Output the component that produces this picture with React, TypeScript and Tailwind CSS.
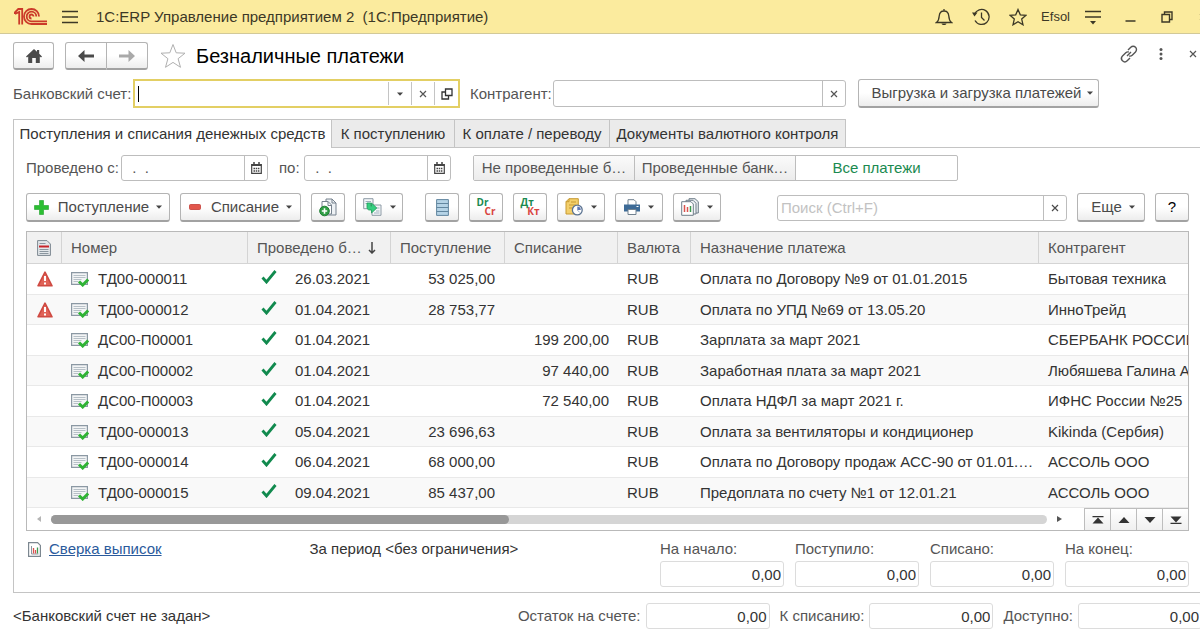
import { ReactNode } from "react"

type Payment = {
    warning?: boolean
    number: string
    date: string
    income?: string
    expense?: string
    purpose: string
    partner: string
}

const payments: Payment[] = [
    { warning: true, number: "ТД00-000011", date: "26.03.2021", income: "53 025,00", purpose: "Оплата по Договору №9 от 01.01.2015", partner: "Бытовая техника" },
    { warning: true, number: "ТД00-000012", date: "01.04.2021", income: "28 753,77", purpose: "Оплата по УПД №69 от 13.05.20", partner: "ИнноТрейд" },
    { number: "ДС00-П00001", date: "01.04.2021", expense: "199 200,00", purpose: "Зарплата за март 2021", partner: "СБЕРБАНК РОССИИ" },
    { number: "ДС00-П00002", date: "01.04.2021", expense: "97 440,00", purpose: "Заработная плата за март 2021", partner: "Любяшева Галина Ар" },
    { number: "ДС00-П00003", date: "01.04.2021", expense: "72 540,00", purpose: "Оплата НДФЛ за март 2021 г.", partner: "ИФНС России №25" },
    { number: "ТД00-000013", date: "05.04.2021", income: "23 696,63", purpose: "Оплата за вентиляторы и кондиционер", partner: "Kikinda (Сербия)" },
    { number: "ТД00-000014", date: "06.04.2021", income: "68 000,00", purpose: "Оплата по Договору продаж АСС-90 от 01.01.…", partner: "АССОЛЬ ООО" },
    { number: "ТД00-000015", date: "09.04.2021", income: "85 437,00", purpose: "Предоплата по счету №1 от 12.01.21", partner: "АССОЛЬ ООО" },
]

const raised = "flex shrink-0 items-center justify-center rounded-[3px] border border-[#b4b4b4] border-b-2 border-b-[#a2a2a2] bg-linear-to-b from-white from-50% to-[#ededed]"

export default function App() {
    return (
        <div className="overflow-hidden bg-white font-['Liberation_Sans',Arial,sans-serif] text-[15px] leading-5 text-[#333]">
            <TitleBar />
            <main className="pl-[13px]">
                <PageHeader />
                <Filters />
                <Tabs />
                <section className="border-b border-l border-[#c4c4c4] pt-[7px] pr-[11px] pb-[5px] pl-3">
                    <PeriodRow />
                    <Toolbar />
                    <PaymentsTable />
                    <Totals />
                </section>
                <Footer />
            </main>
        </div>
    )
}

function TitleBar() {
    return (
        <header className="flex h-[34px] items-center border-b border-[#d2c998] bg-[#fbeb9e] pl-[14px] text-[#3c3826]">
            <Logo />
            <button aria-label="Меню" className="ml-[14px]">
                <Stroke w={16} h={16} width={1.4}><path d="M0 2.500h16M0 8h16M0 13.500h16" /></Stroke>
            </button>
            <h1 className="ml-[18px] whitespace-pre">1С:ERP Управление предприятием 2  (1С:Предприятие)</h1>
            <div className="ml-auto flex shrink-0 items-center">
                <button aria-label="Уведомления">
                    <Stroke w={18} h={18} width={1.3}>
                        <path d="M1.500 14.500c2-1.500 2.500-3 2.700-6.500C4.500 4.500 6.300 3 9 3s4.500 1.500 4.800 5c.2 3.500.7 5 2.700 6.500zM9 1v2" />
                        <path d="M6.500 15.500h5c-.5 2-4.500 2-5 0z" fill="currentColor" stroke="none" />
                    </Stroke>
                </button>
                <button aria-label="История" className="ml-[19px]">
                    <Stroke w={18} h={18} width={1.3}>
                        <path d="M2.500 6.500A7.500 7.500 0 1 1 3 12.500M9.500 4.500V9.500l3 3" />
                        <path d="M0 4.500l5.500 0-3 4z" fill="currentColor" stroke="none" />
                    </Stroke>
                </button>
                <button aria-label="Избранное" className="ml-[19px]">
                    <Stroke w={18} h={18} width={1.3}>
                        <path d="M9 1.500l2.300 5.300 5.700.5-4.300 3.800 1.300 5.700L9 13.800 4 16.800l1.300-5.700L1 7.300l5.700-.5z" />
                    </Stroke>
                </button>
                <button className="ml-[14px] text-[13px]">Efsol</button>
                <button aria-label="Настройки" className="ml-[14px]">
                    <Stroke w={18} h={16} width={1.4}>
                        <path d="M1 2.500h16M1 8h16" />
                        <path d="M6 12h6l-3 3.500z" fill="currentColor" stroke="none" />
                    </Stroke>
                </button>
                <button aria-label="Свернуть" className="ml-[23px]">
                    <Stroke w={11} h={12} width={1.5}><path d="M.5 10h10" /></Stroke>
                </button>
                <button aria-label="Восстановить" className="ml-[25px]">
                    <Stroke w={12} h={12} width={1.4}><path d="M1 3.500h7.500v7.500H1zM3.500 3.500V1H11v7.500H8.500" /></Stroke>
                </button>
                <button aria-label="Закрыть" className="ml-[26px] w-px overflow-hidden">
                    <Cross />
                </button>
            </div>
        </header>
    )
}

function PageHeader() {
    return (
        <div className="flex h-9 items-center pt-2">
            <button aria-label="Домой" className={`${raised} h-7 w-[41px] text-[#4a4a4a]`}>
                <svg width="16" height="14" viewBox="0 0 16 14" fill="currentColor">
                    <path d="M8 0l3 2.800V1h2.200v3.800L16 7.500l-1 1-1.200-1V14H9.800V9H6.200v5H2.200V7.500L1 8.500l-1-1z" />
                </svg>
            </button>
            <div className="ml-[11px] flex">
                <button aria-label="Назад" className={`${raised} h-7 w-[42px] rounded-r-none text-[#4a4a4a]`}>
                    <Arrow />
                </button>
                <button aria-label="Вперед" className={`${raised} h-7 w-[41px] rounded-l-none border-l-0 text-[#a9a9a9]`}>
                    <span className="rotate-180"><Arrow /></span>
                </button>
            </div>
            <button aria-label="В избранное" className="ml-3 text-[#b0b0b0]">
                <Stroke w={26} h={26} width={1}>
                    <path d="M13 1.500l3.200 8.300 8.800.4-6.900 5.500 2.400 8.600L13 19.400l-7.500 4.900 2.400-8.600L1 10.200l8.800-.4z" />
                </Stroke>
            </button>
            <h2 className="ml-[10px] text-[20px] text-black">Безналичные платежи</h2>
            <div className="mb-1 ml-auto flex items-center text-[#555]">
                <button aria-label="Ссылка">
                    <Stroke w={18} h={18} width={1.4}>
                        <path d="M8 5l2.800-2.800a3.200 3.200 0 0 1 4.700 4.700L12.200 10.200a3.200 3.200 0 0 1-3 .8M10 13l-2.800 2.800a3.200 3.200 0 0 1-4.700-4.700L5.800 7.800a3.200 3.200 0 0 1 3-.8M7 11l4-4" />
                    </Stroke>
                </button>
                <button aria-label="Еще" className="ml-[21px]">
                    <svg width="4" height="12" viewBox="0 0 4 12" fill="currentColor">
                        <circle cx="2" cy="1.500" r="1.500" /><circle cx="2" cy="6" r="1.500" /><circle cx="2" cy="10.500" r="1.500" />
                    </svg>
                </button>
                <button aria-label="Закрыть форму" className="mr-[3px] ml-[26px]"><Cross /></button>
            </div>
        </div>
    )
}

function Filters() {
    return (
        <div className="mt-[9px] flex items-center text-[#555]">
            <label htmlFor="account" className="w-[120px] shrink-0">Банковский счет:</label>
            <div className="flex h-[29px] w-[327px] shrink-0 border-2 border-[#e3cf64] py-px">
                <div className="flex min-w-0 flex-1 items-center pl-[3px]">
                    <span className="h-4 w-px bg-black" />
                    <input id="account" className="w-full min-w-0 outline-none" />
                </div>
                <button aria-label="Выбрать счет" className="flex w-[23px] items-center justify-center border-l border-[#c4c4c4]"><Caret /></button>
                <button aria-label="Очистить счет" className="flex w-[23px] items-center justify-center border-l border-[#c4c4c4]"><Cross /></button>
                <button aria-label="Открыть счет" className="flex w-6 items-center justify-center border-l border-[#c4c4c4] text-[#333]">
                    <Stroke w={12} h={12} width={1.3}><path d="M4.500 1H11v6.500H4.500zM4.500 4H1v7h6.500V7.500" /></Stroke>
                </button>
            </div>
            <label htmlFor="partner" className="ml-[10px] w-[83px] shrink-0">Контрагент:</label>
            <div className="flex h-[27px] w-[293px] rounded-[3px] border border-[#bdbdbd]">
                <input id="partner" className="min-w-0 flex-1 px-1 outline-none" />
                <button aria-label="Очистить контрагента" className="flex w-[23px] items-center justify-center border-l border-[#bdbdbd]"><Cross /></button>
            </div>
            <button className={`${raised} ml-3 h-[29px] w-[241px] gap-[6px] pl-2 text-[#4a4a4a]`}>
                Выгрузка и загрузка платежей <Caret />
            </button>
        </div>
    )
}

function Tabs() {
    const tab = "shrink-0 border-[#c4c4c4] text-center"
    return (
        <div role="tablist" className="mt-[11px] flex h-[29px] text-[#333]">
            <button role="tab" aria-selected="true" className={`${tab} w-[319px] border-x border-t`}>Поступления и списания денежных средств</button>
            <button role="tab" aria-selected="false" className={`${tab} w-[123px] border-y border-r bg-[#ebebeb]`}>К поступлению</button>
            <button role="tab" aria-selected="false" className={`${tab} w-[155px] border-y border-r bg-[#ebebeb]`}>К оплате / переводу</button>
            <button role="tab" aria-selected="false" className={`${tab} w-[236px] border-y border-r bg-[#ebebeb]`}>Документы валютного контроля</button>
            <div className="flex-1 border-b border-[#c4c4c4]" />
        </div>
    )
}

function DateField({ id }: { id: string }) {
    return (
        <div className="flex h-[26px] w-[147px] rounded-[3px] border border-[#bdbdbd]">
            <input id={id} defaultValue=" .  ." className="min-w-0 flex-1 px-[6px] whitespace-pre outline-none" />
            <button aria-label="Календарь" className="flex w-[23px] items-center justify-center border-l border-[#bdbdbd]">
                <svg width="11" height="12" viewBox="0 0 11 12" fill="none" stroke="#444">
                    <path d="M.7 2.500h9.600v8.800H.7z" strokeWidth="1.200" />
                    <path d="M.5 3h10" strokeWidth="2" />
                    <path d="M3 0v3M8 0v3" strokeWidth="1.500" />
                    <path d="M2.500 6.500h6M2.500 9h6" strokeWidth="1.500" strokeDasharray="1.500 .7" />
                </svg>
            </button>
        </div>
    )
}

function PeriodRow() {
    const option = "h-full border-[#bdbdbd] text-center whitespace-nowrap"
    return (
        <div className="flex items-center text-[#555]">
            <label htmlFor="from" className="w-[95px] shrink-0">Проведено с:</label>
            <DateField id="from" />
            <label htmlFor="to" className="ml-[11px] w-[25px] shrink-0">по:</label>
            <DateField id="to" />
            <div className="ml-[22px] flex h-[26px] w-[485px] rounded-[2px] border border-[#bdbdbd]">
                <button className={`${option} w-[161px] border-r bg-linear-to-b from-[#fafafa] to-[#ececec]`}>Не проведенные б…</button>
                <button className={`${option} w-[161px] border-r bg-linear-to-b from-[#fafafa] to-[#ececec]`}>Проведенные банк…</button>
                <button aria-pressed="true" className={`${option} flex-1 text-[#1a8a50]`}>Все платежи</button>
            </div>
        </div>
    )
}

function Toolbar() {
    return (
        <div className="mt-3 flex items-center gap-[10px] text-[#4a4a4a]">
            <button className={`${raised} h-[29px] w-[144px] gap-[7px]`}>
                <svg width="15" height="15" viewBox="0 0 15 15" className="mr-[2px]">
                    <path d="M5.500.5h4v5h5v4h-5v5h-4v-5h-5v-4h5z" fill="#2cbf32" stroke="#1fa02a" strokeWidth=".6" />
                </svg>
                Поступление <Caret />
            </button>
            <button className={`${raised} h-[29px] w-[121px] gap-[7px]`}>
                <svg width="12" height="6" viewBox="0 0 12 6" className="mr-[3px]">
                    <rect x=".5" y=".5" width="11" height="5" rx="1" fill="#e2574c" stroke="#c43c35" strokeWidth=".8" />
                </svg>
                Списание <Caret />
            </button>
            <IconButton label="Скопировать">
                <svg width="18" height="19" viewBox="0 0 18 19" fill="none">
                    <path d="M7 1h6l4 4v12H7z" fill="#eef2f5" stroke="#76828e" />
                    <path d="M3 3.500h6l3.500 3.500v9H3z" fill="#fff" stroke="#76828e" />
                    <path d="M9 3.500v4h3.500M13 1v4h4" stroke="#76828e" />
                    <circle cx="5.500" cy="13" r="4.800" fill="#2f9e44" stroke="#1f7d33" />
                    <path d="M5.500 10.300v5.400M2.800 13h5.400" stroke="#fff" strokeWidth="1.600" />
                </svg>
            </IconButton>
            <IconButton label="Создать на основании" menu>
                <svg width="19" height="18" viewBox="0 0 19 18" fill="none">
                    <path d="M.7.700h9.300v10H.7zM9 7h9v10.300H9z" fill="#f4f7f9" stroke="#8d9aa5" />
                    <path d="M2.500 3.500h5.500M2.500 5.500h4M12.500 10h4M13 13h3.500M11 15h5.500" stroke="#9fb0bd" />
                    <path d="M4 5v4c0 2 .9 3 2.800 3h1.700v3l5.300-5-5.300-5v3.200H7.800V5z" fill="#35cf80" stroke="#1f9a58" strokeWidth=".8" />
                </svg>
            </IconButton>
            <span className="w-[2px]" />
            <IconButton label="Реестр">
                <svg width="13" height="17" viewBox="0 0 13 17" fill="#b5d3e6" stroke="#62869f">
                    <path d="M.6.600h11.800v15.800H.6zM.6 4.500h11.800M.6 8.500h11.800M.6 12.500h11.800" />
                </svg>
            </IconButton>
            <IconButton label="Проводки международного учета"><Letters top="Dr" bottom="Cr" /></IconButton>
            <IconButton label="Проводки"><Letters top="Дт" bottom="Кт" /></IconButton>
            <IconButton label="Отложенные документы" menu>
                <svg width="18" height="18" viewBox="0 0 18 18" fill="none">
                    <path d="M4 .700h9.300V16H1V3.700z" fill="#f3cf6b" stroke="#c79a33" />
                    <path d="M4 .700v3H1M6 4h5M4 7h7M4 10h3" stroke="#c79a33" />
                    <circle cx="12.300" cy="12" r="4.900" fill="#fff" stroke="#5b7391" strokeWidth="1.300" />
                    <path d="M12.300 12V8.500a3.500 3.500 0 0 1 3.500 3.500z" fill="#5d77b5" />
                    <path d="M12.300 12l2.400 2.400" stroke="#9bb0cf" />
                </svg>
            </IconButton>
            <IconButton label="Печать" menu>
                <svg width="16" height="16" viewBox="0 0 16 16" fill="none">
                    <path d="M4 6V.700h6l2 2V6" fill="#fff" stroke="#71818f" />
                    <path d="M0 5.500h16v7H0z" fill="#3d6a96" />
                    <path d="M4 10.500h8v5H4z" fill="#fff" stroke="#71818f" />
                    <path d="M12.500 7.500h2" stroke="#fff" />
                </svg>
            </IconButton>
            <IconButton label="Отчеты" menu>
                <svg width="18" height="18" viewBox="0 0 18 18" fill="none" stroke="#6f7d89">
                    <path d="M8 .700h6l3.300 3V15H8z" fill="#e9eef1" />
                    <path d="M5 2.300h7l3 3V16H5z" fill="#f3f6f8" />
                    <path d="M.7 3.700H10l2.300 2.300v11.300H.7z" fill="#fff" />
                    <path d="M3.500 7v7M6.500 9v5" stroke="#d9534f" strokeWidth="1.500" />
                    <path d="M9.500 8v6" stroke="#3c9a4e" strokeWidth="1.500" />
                </svg>
            </IconButton>
            <div className="ml-auto flex h-[26px] w-[290px] rounded-[3px] border border-[#bdbdbd]">
                <input aria-label="Поиск" placeholder="Поиск (Ctrl+F)" className="min-w-0 flex-1 px-[3px] outline-none placeholder:text-[#c2c2c2]" />
                <button aria-label="Очистить поиск" className="flex w-[23px] items-center justify-center border-l border-[#bdbdbd]"><Cross /></button>
            </div>
            <button className={`${raised} h-[29px] w-[68px] gap-[7px] pl-1`}>Еще <Caret /></button>
            <button className={`${raised} h-[29px] w-[34px] text-black`}>?</button>
        </div>
    )
}

function IconButton({ label, menu, children }: { label: string, menu?: boolean, children: ReactNode }) {
    return (
        <button aria-label={label} className={`${raised} h-[29px] ${menu ? "w-12 gap-2" : "w-[34px]"}`}>
            {children}
            {menu && <Caret />}
        </button>
    )
}

function Letters({ top, bottom }: { top: string, bottom: string }) {
    return (
        <span className="flex w-[19px] flex-col font-['Open_Sans',sans-serif] text-[10px] leading-[9px] font-bold">
            <span className="text-left text-[#1a8a50]">{top}</span>
            <span className="text-right text-[#d9453f]">{bottom}</span>
        </span>
    )
}

function PaymentsTable() {
    const head = "border-r border-b border-[#d4d4d4] pl-[9px] text-left font-normal"
    const scroll = "flex w-[26px] items-center justify-center border-t border-l border-[#bdbdbd] bg-linear-to-b from-white to-[#f0f0f0]"
    return (
        <div className="mt-[9px] border border-[#b9b9b9]">
            <table className="w-full table-fixed border-separate border-spacing-0 whitespace-nowrap">
                <colgroup>
                    <col className="w-[35px]" />
                    <col className="w-[186px]" />
                    <col className="w-[143px]" />
                    <col className="w-[114px]" />
                    <col className="w-[113px]" />
                    <col className="w-[73px]" />
                    <col className="w-[348px]" />
                    <col />
                </colgroup>
                <thead>
                    <tr className="h-8 bg-[#f1f1f1] text-[#555]">
                        <th aria-label="Состояние" className="border-r border-b border-[#d4d4d4]">
                            <svg width="14" height="16" viewBox="0 0 14 16" fill="none" className="mx-auto">
                                <path d="M.6.600h9.400l3.400 3.400v11.400H.6z" fill="#e3e7ea" stroke="#7c8790" />
                                <path d="M2.500 3.500h6M2.500 9.500h9M2.500 11.500h9M2.500 13.500h9" stroke="#8b969f" />
                                <path d="M2 6.500h10" stroke="#c8242b" strokeWidth="2" />
                            </svg>
                        </th>
                        <th className={head}>Номер</th>
                        <th className={head}>
                            <span className="flex items-center">
                                Проведено б…
                                <svg width="8" height="12" viewBox="0 0 8 12" fill="none" stroke="#444" strokeWidth="1.500" className="ml-[6px]">
                                    <path d="M4 0v11M1 8l3 3 3-3" />
                                </svg>
                            </span>
                        </th>
                        <th className={head}>Поступление</th>
                        <th className={head}>Списание</th>
                        <th className={head}>Валюта</th>
                        <th className={head}>Назначение платежа</th>
                        <th className="border-b border-[#d4d4d4] pl-[9px] text-left font-normal">Контрагент</th>
                    </tr>
                </thead>
                <tbody>
                    {payments.map((payment) => <PaymentRow key={payment.number} payment={payment} />)}
                </tbody>
            </table>
            <div className="flex h-[22px]">
                <div className="flex flex-1 items-center pl-[10px]">
                    <svg width="4" height="6" viewBox="0 0 4 6" fill="#b5b5b5"><path d="M4 0v6L0 3z" /></svg>
                    <div className="mr-[10px] ml-[10px] h-[9px] flex-1 rounded-full bg-[#d5d5d5]">
                        <div className="h-full w-[46%] rounded-full bg-[#989898]" />
                    </div>
                    <svg width="5" height="6" viewBox="0 0 5 6" fill="#555" className="mr-[22px]"><path d="M0 0v6l5-3z" /></svg>
                </div>
                <button aria-label="В начало" className={scroll}>
                    <svg width="12" height="8" viewBox="0 0 12 8" fill="#333"><path d="M.5 0h11v1.200H.5zM6 1.500L11.500 7.500H.5z" /></svg>
                </button>
                <button aria-label="Вверх" className={scroll}>
                    <svg width="12" height="6" viewBox="0 0 12 6" fill="#333"><path d="M6 0l5.500 6H.5z" /></svg>
                </button>
                <button aria-label="Вниз" className={scroll}>
                    <svg width="12" height="6" viewBox="0 0 12 6" fill="#333"><path d="M6 6L.5 0h11z" /></svg>
                </button>
                <button aria-label="В конец" className={scroll}>
                    <svg width="12" height="8" viewBox="0 0 12 8" fill="#333"><path d="M.5 6.800h11V8H.5zM6 6.500L.5.500h11z" /></svg>
                </button>
            </div>
        </div>
    )
}

function PaymentRow({ payment }: { payment: Payment }) {
    const cell = "border-b border-[#e9e9e9] pl-[9px]"
    return (
        <tr className="odd:h-[31px] even:h-[30px] even:bg-[#f9f9f9]">
            <td className="border-b border-[#e9e9e9]">
                {payment.warning && (
                    <svg width="16" height="16" viewBox="0 0 16 16" className="mx-auto">
                        <path d="M8 1.200L15 14.800H1z" fill="#e06257" stroke="#cf4a42" strokeWidth="1.600" strokeLinejoin="round" />
                        <path d="M8 5v5M8 11.500v2" stroke="#fff" strokeWidth="2" />
                    </svg>
                )}
            </td>
            <td className={cell}>
                <span className="flex items-center gap-[9px]">
                    <svg width="18" height="16" viewBox="0 0 18 16" fill="none">
                        <path d="M.6 1.600h15.800v11.800H.6z" fill="#f3f5f6" stroke="#8b98a3" strokeWidth="1.200" />
                        <path d="M2.500 4.500h12M2.500 6.500h12M2.500 8.500h8M2.500 10.500h5" stroke="#b7c0c7" />
                        <path d="M8 10.500l3.700 3.500 5.500-5.500" stroke="#2fb334" strokeWidth="3" />
                    </svg>
                    {payment.number}
                </span>
            </td>
            <td className={cell}>
                <span className="flex items-center gap-[18px] pl-1">
                    <svg width="16" height="14" viewBox="0 0 16 14" fill="none" stroke="#118a4e" className="mb-1">
                        <path d="M1.500 7.500l4 4.500L14.500 1" strokeWidth="2.800" />
                    </svg>
                    {payment.date}
                </span>
            </td>
            <td className={`${cell} pr-[10px] text-right`}>{payment.income}</td>
            <td className={`${cell} pr-[9px] text-right`}>{payment.expense}</td>
            <td className={cell}>RUB</td>
            <td className={`${cell} truncate`}>{payment.purpose}</td>
            <td className={`${cell} overflow-hidden`}>{payment.partner}</td>
        </tr>
    )
}

const amount = "h-[26px] w-[124px] shrink-0 rounded-[3px] border border-[#dcdcdc] pr-[2px] text-right text-[#333] outline-none"

function Totals() {
    const totals = ["На начало:", "Поступило:", "Списано:", "На конец:"]
    return (
        <div className="mt-2 flex items-start">
            <svg width="13" height="15" viewBox="0 0 13 15" fill="none" className="mt-[3px] ml-[2px]">
                <path d="M.6.600h9l2.800 2.800v11H.6z" fill="#fff" stroke="#7c8790" strokeWidth="1.200" />
                <path d="M3.500 4v8h7" stroke="#8b969f" />
                <path d="M5.500 6v5.500" stroke="#d9534f" strokeWidth="1.300" />
                <path d="M7.500 8v3.500" stroke="#d9534f" strokeWidth="1.300" />
                <path d="M9.500 5.500v6" stroke="#3c9a4e" strokeWidth="1.300" />
            </svg>
            <a href="#reconcile" className="ml-2 text-[#2a5a9c] underline">Сверка выписок</a>
            <p className="ml-[148px]">За период &lt;без ограничения&gt;</p>
            <div className="ml-auto flex gap-[11px] text-[#555]">
                {totals.map((name) => (
                    <label key={name} className="flex flex-col gap-[2px]">
                        {name}
                        <input readOnly value="0,00" className={amount} />
                    </label>
                ))}
            </div>
        </div>
    )
}

function Footer() {
    const balances = ["Остаток на счете:", "К списанию:", "Доступно:"]
    return (
        <footer className="flex items-center pt-[10px]">
            <p>&lt;Банковский счет не задан&gt;</p>
            <div className="-mr-[2px] ml-auto flex gap-[10px] text-[#555]">
                {balances.map((name) => (
                    <label key={name} className="flex items-center gap-[5px]">
                        {name}
                        <input readOnly value="0,00" className={amount} />
                    </label>
                ))}
            </div>
        </footer>
    )
}

function Stroke({ w, h, width, children }: { w: number, h: number, width: number, children: ReactNode }) {
    return (
        <svg width={w} height={h} viewBox={`0 0 ${w} ${h}`} fill="none" stroke="currentColor" strokeWidth={width}>
            {children}
        </svg>
    )
}

function Caret() {
    return <svg width="6" height="4" viewBox="0 0 6 4" fill="#444" className="shrink-0"><path d="M0 .5h6L3 3.700z" /></svg>
}

function Cross() {
    return <Stroke w={8} h={8} width={1.2}><path d="M1 1l6 6M7 1L1 7" /></Stroke>
}

function Arrow() {
    return (
        <svg width="16" height="12" viewBox="0 0 16 12" fill="currentColor">
            <path d="M0 6l6.500-6v4.500H16v3H6.500V12z" />
        </svg>
    )
}

function Logo() {
    return (
        <svg width="34" height="17" viewBox="0 0 34 17" fill="none" stroke="#cb3a2a" strokeWidth="1.800" className="shrink-0">
            <path d="M.8 6V4.500L4.300 1H8.200V16.500M5.200 16.500V4L1 6" />
            <path d="M25 8.500A7.500 7.500 0 1 0 17.500 16H33" />
            <path d="M22.300 8.500A4.800 4.800 0 1 0 17.500 13.300H33" />
            <path d="M19.500 8.500A2 2 0 1 0 17.500 10.500" />
        </svg>
    )
}
